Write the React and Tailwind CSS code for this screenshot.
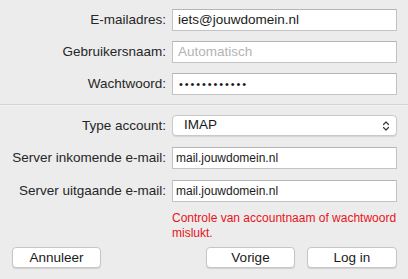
import React from 'react';

const font = { fontFamily: '"Liberation Sans", Arial, sans-serif' };

const Label = ({ children }) => (
  <div className="text-right text-[13.5px] text-[#262626] leading-none pr-[6px]">{children}</div>
);

const Field = ({ children, small, muted }) => (
  <div
    className={`h-[22px] bg-white border border-[#c3c3c3] border-t-[#b5b5b5] flex items-center ${
      small ? 'text-[12px] pl-[3px]' : 'text-[13.5px] pl-[5px]'
    } ${muted ? 'text-[#b3b3b3]' : 'text-[#1a1a1a]'}`}
  >
    {children}
  </div>
);

const Button = ({ children, className = '' }) => (
  <button
    className={`h-[21px] bg-white border border-[#c6c6c6] rounded-[4px] shadow-[0_1px_1px_rgba(0,0,0,0.12)] text-[13.5px] text-[#1a1a1a] leading-none ${className}`}
  >
    {children}
  </button>
);

export default function App() {
  return (
    <div className="w-[408px] h-[279px] bg-[#ececec] overflow-hidden" style={font}>
      {/* account fields */}
      <div className="grid grid-cols-[172px_225px] items-center gap-y-[10px] pt-[9px]">
        <Label>E-mailadres:</Label>
        <Field>iets@jouwdomein.nl</Field>
        <Label>Gebruikersnaam:</Label>
        <Field muted>Automatisch</Field>
        <Label>Wachtwoord:</Label>
        <Field>
          <span className="text-[11px] tracking-[1.9px] pl-[1px]">••••••••••••</span>
        </Field>
      </div>

      <div className="mt-[9px] border-t border-[#d2d2d2] border-b border-b-[#f4f4f4]" />

      {/* server fields */}
      <div className="grid grid-cols-[172px_225px] items-center gap-y-[11px] pt-[9px]">
        <Label>Type account:</Label>
        <div className="h-[21px] bg-white border border-[#c9c9c9] rounded-[4px] shadow-[0_1px_1px_rgba(0,0,0,0.1)] flex items-center justify-between pl-[11px] pr-[6px] text-[13.5px] text-[#1a1a1a]">
          <span>IMAP</span>
          <svg width="8" height="12" viewBox="0 0 8 12" fill="none" stroke="#3a3a3a" strokeWidth="1.2" strokeLinecap="round" strokeLinejoin="round">
            <path d="M1.5 4.5 L4 2 L6.5 4.5" />
            <path d="M1.5 7.5 L4 10 L6.5 7.5" />
          </svg>
        </div>
        <Label>Server inkomende e-mail:</Label>
        <Field small>mail.jouwdomein.nl</Field>
        <Label>Server uitgaande e-mail:</Label>
        <Field small>mail.jouwdomein.nl</Field>
      </div>

      <div className="pl-[172px] pt-[9px] text-[12px] leading-[15px] text-[#e8141b]">
        Controle van accountnaam of wachtwoord
        <br />
        mislukt.
      </div>

      <div className="flex items-center pl-[12px] pr-[11px] pt-[6px]">
        <Button className="w-[89px]">Annuleer</Button>
        <div className="flex-1" />
        <Button className="w-[89px]">Vorige</Button>
        <Button className="w-[90px] ml-[12px]">Log in</Button>
      </div>
    </div>
  );
}
